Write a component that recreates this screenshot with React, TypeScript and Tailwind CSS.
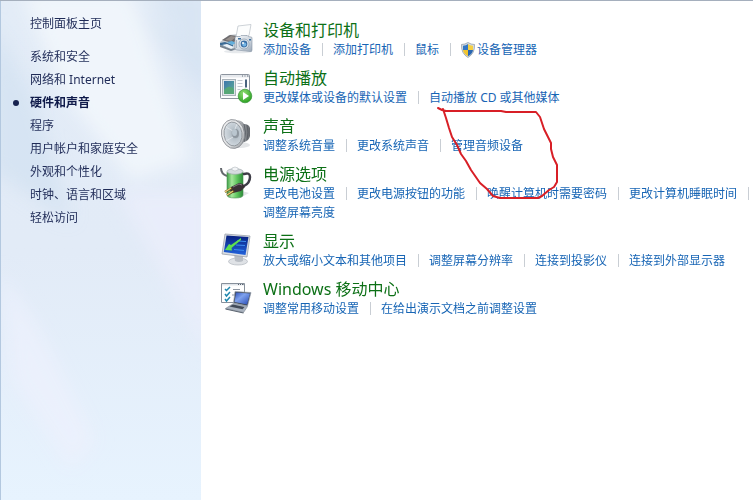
import { cva } from "class-variance-authority";
import type { ReactNode } from "react";

const sidebarLinks = [
  "系统和安全",
  "网络和 Internet",
  "硬件和声音",
  "程序",
  "用户帐户和家庭安全",
  "外观和个性化",
  "时钟、语言和区域",
  "轻松访问",
];

const activeLink = "硬件和声音";

const sidebarLink = cva("relative block leading-[23px] hover:underline", {
  variants: {
    active: { true: "font-bold text-[#0f1a4a]", false: "" },
  },
});

function PrinterIcon() {
  return (
    <svg viewBox="0 0 36 36" className="size-9 shrink-0" aria-hidden="true">
      <defs>
        <linearGradient id="camera" x1="0" y1="0" x2="1" y2="1">
          <stop offset="0" stopColor="#f6f8fa" />
          <stop offset=".6" stopColor="#ccd4dd" />
          <stop offset="1" stopColor="#98a5b5" />
        </linearGradient>
      </defs>
      <ellipse cx="20" cy="31.500" rx="14" ry="1.800" fill="#e6e9ec" />
      <path d="m2 22 9-7 9-1v15l-6 2-12-5z" fill="#c3cad1" />
      <path d="m4 20 8-5 7 1v4l-5 3z" fill="#6d6a6c" />
      <path d="m7 20 6-4 5 1-5 4z" fill="#968f8c" />
      <path d="m2 23 5-1 8 3v2l-3 1-10-3z" fill="#3c6c96" />
      <path d="m4 25 5-1 7 3-3 2z" fill="#edf4f9" />
      <path d="m9 22 5-1 4 2-4 2z" fill="#63b0dd" />
      <path d="m2 25 11 4 5-1v1l-5 2-11-4z" fill="#77838f" />
      <path d="m20 6 13-1.500-2 11L18 17z" fill="#fcfdfd" stroke="#c0c6cd" strokeWidth=".8" />
      <path d="M17 18q0-1.500 1.500-1.500H22l1-1h6l1 1 3 .5q1 0 1 1V30q0 2-2 1.500L19 30q-2 0-2-2z" fill="url(#camera)" stroke="#8794a5" strokeWidth=".6" />
      <path d="M20 18h3v1.500h-3zM31 19h2v1.500h-2z" fill="#3b6f9e" />
      <path d="M18.500 20v8" stroke="#aab5c1" />
      <circle cx="26" cy="24" r="5" fill="#e6ecf2" stroke="#8393a5" strokeWidth=".7" />
      <circle cx="26" cy="24" r="3.400" fill="#3d6fa4" />
      <circle cx="26.300" cy="24.500" r="2" fill="#76b6e6" />
      <circle cx="25" cy="23" r="1" fill="#fff" />
    </svg>
  );
}

function AutoPlayIcon() {
  return (
    <svg viewBox="0 0 36 36" className="size-9 shrink-0" aria-hidden="true">
      <defs>
        <linearGradient id="picture" x1="0" y1="0" x2="1" y2="1">
          <stop offset="0" stopColor="#3d76ad" />
          <stop offset="1" stopColor="#5fae94" />
        </linearGradient>
        <radialGradient id="play" cx=".4" cy=".3" r=".7">
          <stop offset="0" stopColor="#8fdc72" />
          <stop offset="1" stopColor="#2ea324" />
        </radialGradient>
      </defs>
      <rect x="2.500" y="6.500" width="29" height="24" rx="1" fill="#fdfdfe" stroke="#8c949e" />
      <path d="M3 7h28v2.500H3z" fill="#e6e9ed" />
      <path d="M24 8h1M26.500 8h1M29 8h1.500" stroke="#5f6b78" />
      <rect x="4.500" y="11.500" width="13" height="16" fill="#dfe5e8" stroke="#aab3ba" />
      <rect x="6" y="13" width="10" height="13" fill="url(#picture)" />
      <path d="M6 26v-4q4-4 6-3 3 0 4 3v4z" fill="#56a777" />
      <path d="M19.500 12.500h5M19.500 15.500h5M19.500 18.500h5M19.500 21.500h3" stroke="#c2c8cf" />
      <path d="M28 11.500v8" stroke="#49637f" strokeWidth="2" />
      <circle cx="27" cy="28" r="6.800" fill="url(#play)" stroke="#349035" strokeWidth=".7" />
      <path d="m25 24 6 4-6 4z" fill="#fff" />
    </svg>
  );
}

function SpeakerIcon() {
  return (
    <svg viewBox="0 0 36 36" className="size-9 shrink-0" aria-hidden="true">
      <defs>
        <linearGradient id="rim" x1="0" y1="0" x2="1" y2="1">
          <stop offset="0" stopColor="#f6f6f7" />
          <stop offset=".6" stopColor="#dcdee0" />
          <stop offset="1" stopColor="#8d9196" />
        </linearGradient>
        <linearGradient id="horn">
          <stop offset="0" stopColor="#d9dbdd" />
          <stop offset=".6" stopColor="#8e9297" />
          <stop offset="1" stopColor="#63676c" />
        </linearGradient>
        <radialGradient id="cone" cx=".6" cy=".5" r=".6">
          <stop offset="0" stopColor="#8b959e" />
          <stop offset=".4" stopColor="#b9c3cb" />
          <stop offset="1" stopColor="#d5dce2" />
        </radialGradient>
      </defs>
      <ellipse cx="22" cy="29" rx="10" ry="3" fill="#e3e5e7" />
      <path d="M17 4q7 0 9 4 5 0 6 4v8q-1 5-6 6l-7 4z" fill="url(#horn)" />
      <path d="M26 8q3 8 0 18M29 9q2 7 0 15" stroke="#565b61" fill="none" strokeWidth=".8" />
      <ellipse cx="15" cy="18" rx="11.500" ry="14.500" fill="url(#rim)" stroke="#83878c" strokeWidth=".8" transform="rotate(-8 15 18)" />
      <ellipse cx="15" cy="18" rx="9" ry="12" fill="url(#cone)" stroke="#868c92" strokeWidth=".8" transform="rotate(-8 15 18)" />
      <path d="m8 11 7 4M8 25l7-4M19 8l-2 5" stroke="#e6eaed" strokeWidth=".8" />
      <ellipse cx="17.500" cy="17.500" rx="3.500" ry="4.500" fill="#8e979f" />
      <ellipse cx="16.500" cy="16.500" rx="2.500" ry="3.500" fill="#bac6cf" />
    </svg>
  );
}

function PowerIcon() {
  return (
    <svg viewBox="0 0 36 36" className="size-9 shrink-0" aria-hidden="true">
      <defs>
        <linearGradient id="battery">
          <stop offset="0" stopColor="#3f9f47" />
          <stop offset=".3" stopColor="#a5e79b" />
          <stop offset=".65" stopColor="#5bc35b" />
          <stop offset="1" stopColor="#2b8838" />
        </linearGradient>
      </defs>
      <path d="m22 34 9-5-7-2z" fill="#e2e4e7" />
      <path d="M3 4q0 6 6 8" fill="none" stroke="#65696e" strokeWidth="2" />
      <path d="M9 8v23q0 3 8 3t8-3V8z" fill="url(#battery)" stroke="#4b9152" strokeWidth=".6" />
      <ellipse cx="17" cy="7.500" rx="8" ry="2.800" fill="#d6dce0" stroke="#9da6aa" strokeWidth=".7" />
      <path d="M14 6V4q3-2 6 0v2q-3 2-6 0z" fill="#f3f5f7" stroke="#b3bac0" strokeWidth=".6" />
      <path d="M26 10q6-2 6 3 0 6-6 9" fill="none" stroke="#3e3d47" strokeWidth="2.500" strokeLinecap="round" />
      <path d="m13 23 8-4 4 1 2 3-4 4-8 2-3-2z" fill="#3a3136" />
      <path d="m15 23 6-3 3 1" fill="none" stroke="#857b80" />
      <path d="m14 24-7 4M16 27l-7 4" stroke="#68531d" strokeWidth="2.200" />
      <path d="m13 24-6 4M15 27l-6 4" stroke="#ecd47b" strokeWidth="1.200" />
    </svg>
  );
}

function DisplayIcon() {
  return (
    <svg viewBox="0 0 36 36" className="size-9 shrink-0" aria-hidden="true">
      <defs>
        <linearGradient id="screen" x1="0" y1="0" x2="0" y2="1">
          <stop offset="0" stopColor="#07207f" />
          <stop offset="1" stopColor="#2263dc" />
        </linearGradient>
      </defs>
      <ellipse cx="20" cy="30.500" rx="9.500" ry="3.500" fill="#dfe2e6" stroke="#b0b6bd" strokeWidth=".7" />
      <path d="m16 23 9 2v5q-4 2-8 0z" fill="#b9bec5" />
      <path d="m7 3 25 2-3 21-25-3z" fill="#d9dde3" stroke="#9aa1ab" strokeWidth=".8" />
      <path d="m8.500 4.500 22 1.500-3 18L5.800 21z" fill="url(#screen)" />
      <path d="m19 10 9 .5M18 14l9 .5M16 18.500l10 1" stroke="#3d8df0" strokeWidth="1.200" />
      <path d="m23 7-10 7-2-1-4 6 7 .5-.5-2.500L23 9z" fill="#5ee04f" />
    </svg>
  );
}

function MobilityIcon() {
  return (
    <svg viewBox="0 0 36 36" className="size-9 shrink-0" aria-hidden="true">
      <defs>
        <linearGradient id="laptop" x1="0" y1="0" x2="1" y2="1">
          <stop offset="0" stopColor="#2c4fb5" />
          <stop offset=".4" stopColor="#7fa2ee" />
          <stop offset="1" stopColor="#2649b4" />
        </linearGradient>
      </defs>
      <path d="M3.500 4.500h23v19h-23z" fill="#fff" stroke="#87909b" />
      <path d="M4 5h22v1.500H4z" fill="#e2e6eb" />
      <path d="M20 5.500h1M22 5.500h1M24 5.500h1.500" stroke="#59636f" />
      <path d="m7 10 1.500 1.500L12 8M7 15l1.500 2 3.500-4M7 20l1.500 2 3.500-4" fill="none" stroke="#1f87ae" strokeWidth="1.500" />
      <path d="M15 10.500h7M14 16h3" stroke="#8d96a2" />
      <path d="m17 12.500 16 1-3.500 13.500-14-3z" fill="#3d4653" stroke="#9ba4b2" strokeWidth=".7" />
      <path d="m18 13.500 14 1-3 11-12.500-2.500z" fill="url(#laptop)" />
      <path d="m15.500 24.500 14 3-4 6-18-4z" fill="#aab3bf" stroke="#7b8490" strokeWidth=".6" />
      <path d="m15 25.500 11.500 2.500-2 2.200-13-2.700z" fill="#424b59" />
      <path d="m7.500 29.500 18 4v1l-18-4z" fill="#5b6470" />
    </svg>
  );
}

function ShieldIcon() {
  return (
    <svg viewBox="0 0 14 16" className="h-4 w-3.5" aria-hidden="true">
      <path d="M7 .5Q10 2.500 13.500 2.500 14 11.500 7 15.500 0 11.500.5 2.500 4 2.500 7 .5z" fill="#d6dde4" stroke="#8793a0" strokeWidth=".7" />
      <path d="M7 2Q5 3.500 2 3.700V8h5z" fill="#3376c3" />
      <path d="M7 2q2 1.500 5 1.700V8H7z" fill="#f4cf43" />
      <path d="M2 8q.5 4 5 6.200V8z" fill="#f0c431" />
      <path d="M12 8q-.5 4-5 6.200V8z" fill="#2865b0" />
    </svg>
  );
}

type Category = {
  title: string;
  icon: ReactNode;
  links: string[];
};

const categories: Category[] = [
  {
    title: "设备和打印机",
    icon: <PrinterIcon />,
    links: ["添加设备", "添加打印机", "鼠标", "设备管理器"],
  },
  {
    title: "自动播放",
    icon: <AutoPlayIcon />,
    links: ["更改媒体或设备的默认设置", "自动播放 CD 或其他媒体"],
  },
  {
    title: "声音",
    icon: <SpeakerIcon />,
    links: ["调整系统音量", "更改系统声音", "管理音频设备"],
  },
  {
    title: "电源选项",
    icon: <PowerIcon />,
    links: [
      "更改电池设置",
      "更改电源按钮的功能",
      "唤醒计算机时需要密码",
      "更改计算机睡眠时间",
      "调整屏幕亮度",
    ],
  },
  {
    title: "显示",
    icon: <DisplayIcon />,
    links: [
      "放大或缩小文本和其他项目",
      "调整屏幕分辨率",
      "连接到投影仪",
      "连接到外部显示器",
    ],
  },
  {
    title: "Windows 移动中心",
    icon: <MobilityIcon />,
    links: ["调整常用移动设置", "在给出演示文档之前调整设置"],
  },
];

// links that ask for administrator rights
const elevated = ["设备管理器"];

function Sidebar() {
  return (
    <nav className="relative w-[201px] shrink-0 overflow-hidden border-l border-[#b3c8df] bg-linear-to-b from-[#e3ecf7] via-[#e2ebf7] to-[#e7f3fe] pt-[11px] pl-[29px] text-[#1f2b57]">
      <svg
        viewBox="0 0 200 500"
        preserveAspectRatio="none"
        className="absolute inset-0 size-full"
        aria-hidden="true"
      >
        <defs>
          <filter id="soft" x="-30%" y="-30%" width="160%" height="160%">
            <feGaussianBlur stdDeviation="9" />
          </filter>
        </defs>
        <g filter="url(#soft)">
          <path d="M20-10h110l60 170-60 20L60 90Z" fill="#f4f8fc" opacity=".75" />
          <path d="M150-10h60v100Z" fill="#d6e4f3" opacity=".8" />
          <path d="M140 10 210 60v50Z" fill="#d3e1f1" opacity=".6" />
          <path d="M-10 20 30 90 70 220-10 170Z" fill="#cfdff0" opacity=".6" />
          <path d="M115 190 210 360V190Z" fill="#ebeefb" opacity=".8" />
          <path d="M0 270 40 330 95 440 70 470 10 380Z" fill="#ecf0fc" opacity=".8" />
        </g>
      </svg>
      <a href="#" className="relative block leading-[23px] hover:underline">
        控制面板主页
      </a>
      <ul className="mt-[10px]">
        {sidebarLinks.map((link) => (
          <li key={link} className="relative">
            {link === activeLink && (
              <span className="absolute top-[9px] -left-[17px] size-[6px] rounded-full bg-[#17224f]" />
            )}
            <a
              href="#"
              aria-current={link === activeLink ? "page" : undefined}
              className={sidebarLink({ active: link === activeLink })}
            >
              {link}
            </a>
          </li>
        ))}
      </ul>
    </nav>
  );
}

function CategoryRow({ title, icon, links }: Category) {
  return (
    <section className="flex gap-[9px]">
      {icon}
      <div className="min-w-0">
        <h2 className="text-base leading-5 text-[#0c7016]">
          <a href="#" className="hover:underline">
            {title}
          </a>
        </h2>
        <ul className="flex flex-wrap gap-x-[10px] text-[#1765b5]">
          {links.map((link, i) => (
            <li key={link} className="flex items-center">
              <a
                href="#"
                className="flex items-center gap-0.5 leading-[19px] whitespace-nowrap hover:underline"
              >
                {elevated.includes(link) && <ShieldIcon />}
                {link}
              </a>
              {i < links.length - 1 && (
                <span className="ml-[11px] h-[13px] w-px bg-[#c9ced4]" />
              )}
            </li>
          ))}
        </ul>
      </div>
    </section>
  );
}

export default function App() {
  return (
    <div className="flex min-h-screen border-t border-[#a5afbd] bg-white font-['Noto_Sans','Noto_Sans_CJK_SC',sans-serif] text-xs">
      <Sidebar />
      <main className="relative flex min-w-0 flex-1 flex-col gap-[9px] pt-[19px] pl-[17px]">
        {categories.map((category) => (
          <CategoryRow key={category.title} {...category} />
        ))}
        <svg
          viewBox="0 0 124 96"
          className="pointer-events-none absolute top-[105px] left-[234px] h-24 w-[124px]"
          fill="none"
          stroke="#d81f26"
          strokeWidth="2"
          strokeLinejoin="round"
          strokeLinecap="round"
          aria-hidden="true"
        >
          <path d="m3 2 4 2 4 1h55l5 1h30l4 5 2 6 2 6 5 10 2 4v6l2 8 4 8v17l-3 5-5 3-7 6-4 2H65l-7-2-6-7-7-6-9-13-5-9-5-7-4-9-5-8-3-9-3-10-3-9" />
        </svg>
      </main>
    </div>
  );
}
